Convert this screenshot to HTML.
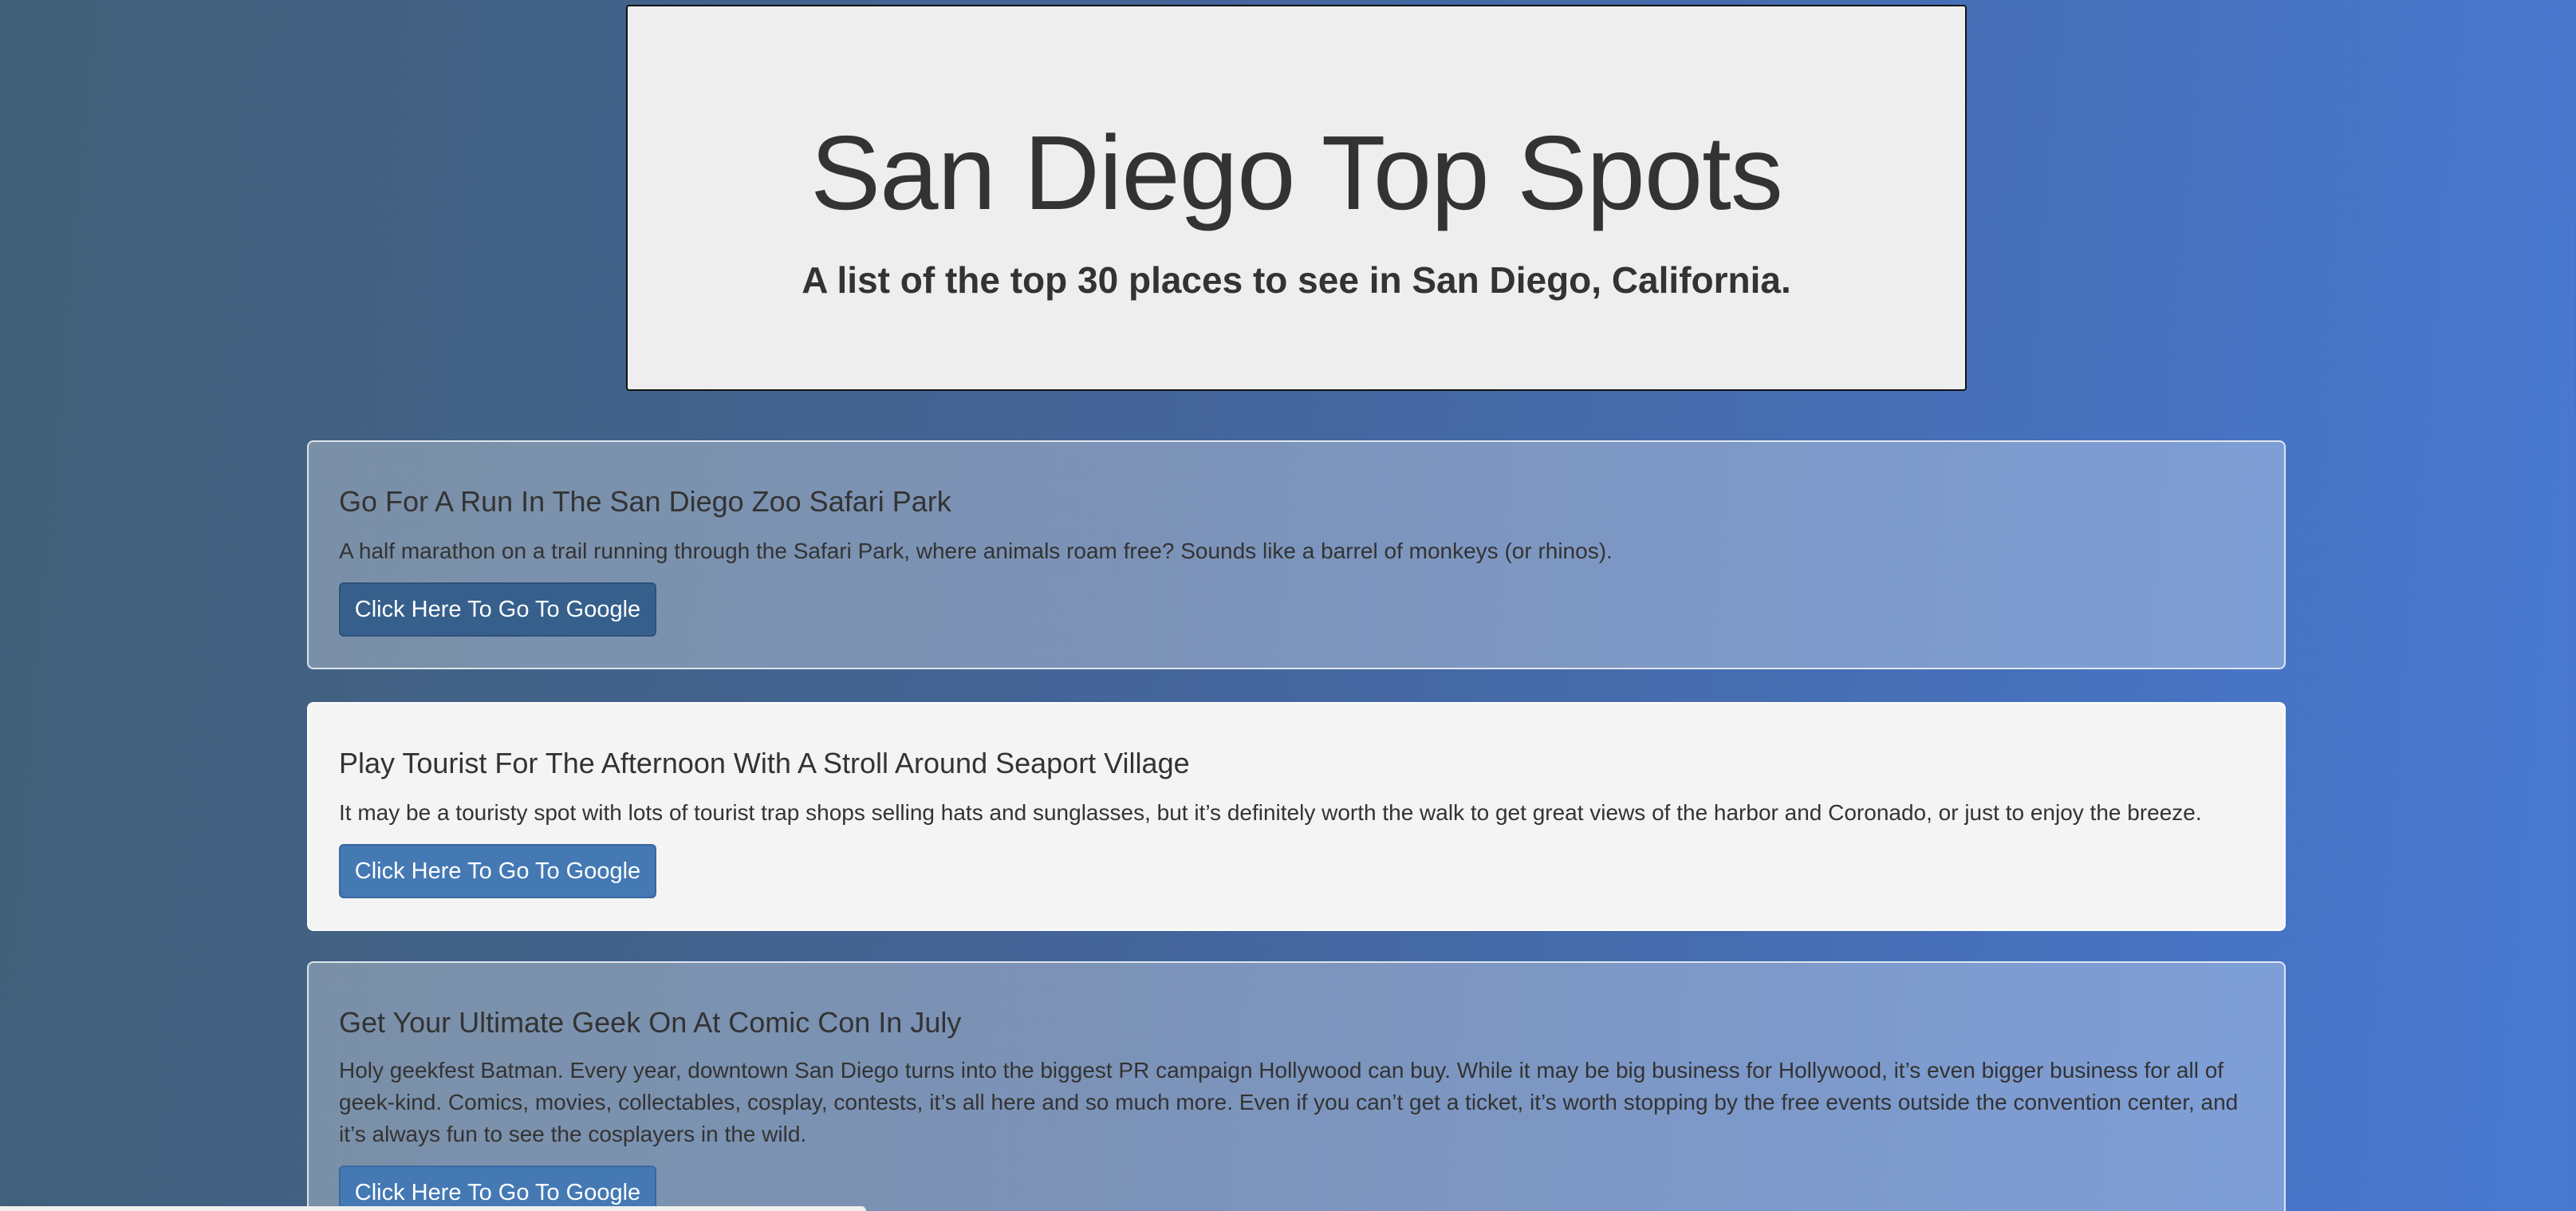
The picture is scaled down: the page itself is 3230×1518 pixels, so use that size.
<!DOCTYPE html>
<html style="width:3230px;height:1518px;overflow:hidden;"><head><style>
html,body{margin:0;padding:0;}
body{width:3230px;height:1518px;overflow:hidden;position:relative;
background:linear-gradient(95deg,#405f78 0%,#44659a 45%,#4879d2 100%);
font-family:"Liberation Sans",Helvetica,Arial,sans-serif;color:#333;}
.hdr{position:absolute;left:785px;top:6px;width:1677px;height:480px;background:#eeeeee;border:2px solid #111;border-radius:4px;text-align:center;}
.hdr h1{margin:0;position:absolute;top:134px;left:0;right:0;font-size:132px;font-weight:normal;line-height:150px;letter-spacing:-1px;}
.hdr p{margin:0;position:absolute;top:313px;left:0;right:0;font-size:46px;font-weight:bold;line-height:60px;color:#333;}
.card{position:absolute;left:385px;width:2399px;padding:53px 40px 39px 38px;border:2px solid rgba(255,255,255,0.75);border-radius:8px;background:rgba(255,255,255,0.3);}
.card.s{background:#f4f4f4;}
.card h3{margin:0;font-size:36px;font-weight:normal;line-height:44px;}
.card p{margin:20px 0 19px;font-size:28px;line-height:40px;}
.btn{display:inline-block;width:394px;height:64px;line-height:64px;text-align:center;color:#fff;font-size:29px;background:#4479b4;border:2px solid #3a68a0;border-radius:6px;}
.btn.d{background:#365f8c;border-color:#2d527c;}
.bar{position:absolute;left:0;top:1512px;width:1086px;height:10px;background:#efefef;border-top-right-radius:6px;}
</style></head><body>
<div class="hdr"><h1>San Diego Top Spots</h1><p>A list of the top 30 places to see in San Diego, California.</p></div>
<div class="card" style="top:552px;"><h3>Go For A Run In The San Diego Zoo Safari Park</h3><p>A half marathon on a trail running through the Safari Park, where animals roam free? Sounds like a barrel of monkeys (or rhinos).</p><span class="btn d">Click Here To Go To Google</span></div>
<div class="card s" style="top:880px;"><h3>Play Tourist For The Afternoon With A Stroll Around Seaport Village</h3><p>It may be a touristy spot with lots of tourist trap shops selling hats and sunglasses, but it’s definitely worth the walk to get great views of the harbor and Coronado, or just to enjoy the breeze.</p><span class="btn">Click Here To Go To Google</span></div>
<div class="card" style="top:1205px;"><h3>Get Your Ultimate Geek On At Comic Con In July</h3><p style="margin-top:18px">Holy geekfest Batman. Every year, downtown San Diego turns into the biggest PR campaign Hollywood can buy. While it may be big business for Hollywood, it’s even bigger business for all of geek-kind. Comics, movies, collectables, cosplay, contests, it’s all here and so much more. Even if you can’t get a ticket, it’s worth stopping by the free events outside the convention center, and it’s always fun to see the cosplayers in the wild.</p><span class="btn">Click Here To Go To Google</span></div>
<div class="bar"></div>
</body></html>
